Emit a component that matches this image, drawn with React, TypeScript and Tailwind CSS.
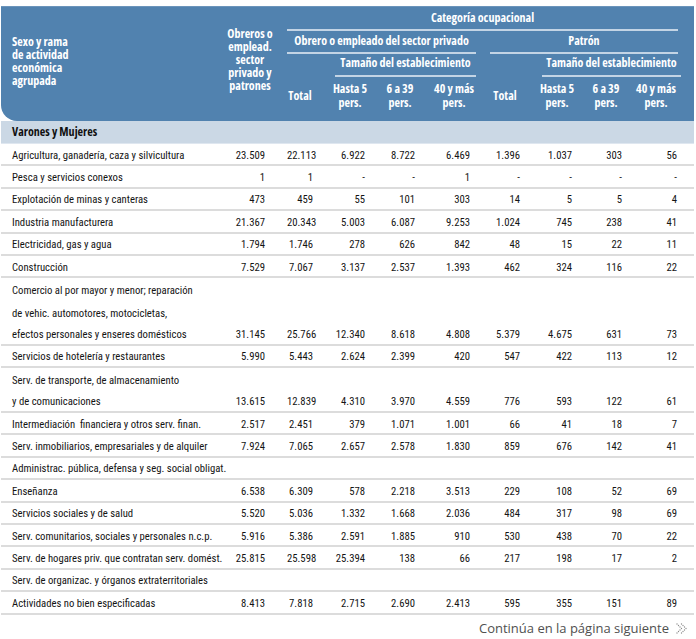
import React from 'react';

/* ─── Column setup ─────────────────────────────────────────────────────── */

const grid = 'grid grid-cols-[234px_52px_48px_50px_53px_52px_52px_48px_45px_59px]';

// right padding so the numbers line up under their headings
const pads = ['', 'pr-[22px]', 'pr-[22px]', 'pr-[20px]', 'pr-[23px]', 'pr-[20px]', 'pr-[22px]', 'pr-[18px]', 'pr-[13px]', 'pr-[17px]'];

type Row = { label: string; values?: string[]; line?: boolean };

const rows: Row[] = [
  { label: 'Agricultura, ganadería, caza y silvicultura', values: ['23.509', '22.113', '6.922', '8.722', '6.469', '1.396', '1.037', '303', '56'] },
  { label: 'Pesca y servicios conexos', values: ['1', '1', '-', '-', '1', '-', '-', '-', '-'] },
  { label: 'Explotación de minas y canteras', values: ['473', '459', '55', '101', '303', '14', '5', '5', '4'] },
  { label: 'Industria manufacturera', values: ['21.367', '20.343', '5.003', '6.087', '9.253', '1.024', '745', '238', '41'] },
  { label: 'Electricidad, gas y agua', values: ['1.794', '1.746', '278', '626', '842', '48', '15', '22', '11'] },
  { label: 'Construcción', values: ['7.529', '7.067', '3.137', '2.537', '1.393', '462', '324', '116', '22'] },
  { label: 'Comercio al por mayor y menor; reparación', line: false },
  { label: 'de vehic. automotores, motocicletas,', line: false },
  { label: 'efectos personales y enseres domésticos', values: ['31.145', '25.766', '12.340', '8.618', '4.808', '5.379', '4.675', '631', '73'] },
  { label: 'Servicios de hotelería y restaurantes', values: ['5.990', '5.443', '2.624', '2.399', '420', '547', '422', '113', '12'] },
  { label: 'Serv. de transporte, de almacenamiento', line: false },
  { label: 'y de comunicaciones', values: ['13.615', '12.839', '4.310', '3.970', '4.559', '776', '593', '122', '61'] },
  { label: 'Intermediación  financiera y otros serv. finan.', values: ['2.517', '2.451', '379', '1.071', '1.001', '66', '41', '18', '7'] },
  { label: 'Serv. inmobiliarios, empresariales y de alquiler', values: ['7.924', '7.065', '2.657', '2.578', '1.830', '859', '676', '142', '41'] },
  { label: 'Administrac. pública, defensa y seg. social obligat.' },
  { label: 'Enseñanza', values: ['6.538', '6.309', '578', '2.218', '3.513', '229', '108', '52', '69'] },
  { label: 'Servicios sociales y de salud', values: ['5.520', '5.036', '1.332', '1.668', '2.036', '484', '317', '98', '69'] },
  { label: 'Serv. comunitarios, sociales y personales n.c.p.', values: ['5.916', '5.386', '2.591', '1.885', '910', '530', '438', '70', '22'] },
  { label: 'Serv. de hogares priv. que contratan serv. domést.', values: ['25.815', '25.598', '25.394', '138', '66', '217', '198', '17', '2'] },
  { label: 'Serv. de organizac. y órganos extraterritoriales' },
  { label: 'Actividades no bien especificadas', values: ['8.413', '7.818', '2.715', '2.690', '2.413', '595', '355', '151', '89'] },
];

function Rule() {
  return <div className="h-[2px] bg-[#c3d4e5]" />;
}

function Pair({ top, bottom, pad, col }: { top: string; bottom: string; pad: string; col: string }) {
  return (
    <div className={`${col} row-start-4 flex flex-col items-center justify-center leading-[14px] whitespace-nowrap ${pad}`}>
      <span>{top}</span>
      <span>{bottom}</span>
    </div>
  );
}

function MoreIcon() {
  // two dotted chevrons
  const dots = [
    [0, 0], [1.5, 1.5], [3, 3], [4.5, 4.5], [3, 6], [1.5, 7.5], [0, 9],
  ];
  return (
    <svg width="12" height="11" viewBox="-1 -1 12 11" className="shrink-0">
      {dots.map(([x, y], i) => (
        <g key={i}>
          <circle cx={x} cy={y} r="0.65" fill="#8a8a8a" />
          <circle cx={x + 4.5} cy={y} r="0.65" fill="#8a8a8a" />
        </g>
      ))}
    </svg>
  );
}

export default function App() {
  return (
    <div className="w-[696px] h-[639px] bg-white text-[#141414] font-['Open_Sans',sans-serif] overflow-hidden">
      <div className="ml-px w-[693px] pt-[6px]">
        {/* Header */}
        <div className={`${grid} grid-rows-[25px_22px_23px_38px] pb-[6px] bg-[#5182af] rounded-bl-[16px] text-white font-bold text-[12px] font-stretch-[85%] border-t border-[#6b94bb]`}>
          <div className="col-start-1 row-start-1 row-span-4 pl-[11px] pt-[28px] flex flex-col leading-[13px]">
            <span>Sexo y rama</span>
            <span>de actividad</span>
            <span>económica</span>
            <span>agrupada</span>
          </div>
          <div className="col-start-2 row-start-1 row-span-4 pt-[20px] pr-[22px] flex flex-col items-center leading-[13px] whitespace-nowrap">
            <span>Obreros o</span>
            <span>emplead.</span>
            <span>sector</span>
            <span>privado y</span>
            <span>patrones</span>
          </div>

          <div className="col-start-3 col-span-8 row-start-1 mr-[16px] pt-[4px] flex flex-col">
            <div className="text-center leading-[14px]">Categoría ocupacional</div>
            <div className="mt-[4px]"><Rule /></div>
          </div>

          <div className="col-start-3 col-span-4 row-start-2 mr-[14px] pt-[2px] flex flex-col">
            <div className="text-center leading-[14px] whitespace-nowrap">Obrero o empleado del sector privado</div>
            <div className="mt-[4px]"><Rule /></div>
          </div>
          <div className="col-start-7 col-span-4 row-start-2 mr-[16px] pt-[2px] flex flex-col">
            <div className="text-center leading-[14px]">Patrón</div>
            <div className="mt-[4px]"><Rule /></div>
          </div>

          <div className="col-start-4 col-span-3 row-start-3 mr-[14px] pt-[2px] flex flex-col">
            <div className="text-center leading-[14px] whitespace-nowrap">Tamaño del establecimiento</div>
            <div className="mt-[5px]"><Rule /></div>
          </div>
          <div className="col-start-8 col-span-3 row-start-3 mr-[13px] pt-[2px] flex flex-col">
            <div className="text-center leading-[14px] whitespace-nowrap">Tamaño del establecimiento</div>
            <div className="mt-[5px]"><Rule /></div>
          </div>

          <div className="col-start-3 row-start-4 flex items-center justify-center pr-[22px]">Total</div>
          <Pair col="col-start-4" top="Hasta 5" bottom="pers." pad="pr-[20px]" />
          <Pair col="col-start-5" top="6 a 39" bottom="pers." pad="pr-[23px]" />
          <Pair col="col-start-6" top="40 y más" bottom="pers." pad="pr-[20px]" />
          <div className="col-start-7 row-start-4 flex items-center justify-center pr-[22px]">Total</div>
          <Pair col="col-start-8" top="Hasta 5" bottom="pers." pad="pr-[18px]" />
          <Pair col="col-start-9" top="6 a 39" bottom="pers." pad="pr-[13px]" />
          <Pair col="col-start-10" top="40 y más" bottom="pers." pad="pr-[17px]" />
        </div>

        {/* Section band */}
        <div className="h-[23px] bg-[#cbd8e5] border-b border-[#dfe7f0] pl-[11px] flex items-center font-bold text-[12px] font-stretch-[85%] text-[#111]">
          Varones y Mujeres
        </div>

        {/* Body */}
        <div className="text-[10.7px] font-['Roboto_Condensed','Roboto',sans-serif]">
          {rows.map((r, i) => (
            <div
              key={i}
              className={`${grid} h-[22.42px] pt-[3px] items-center ${r.line === false ? '' : 'border-b-2 border-[#dcdcdc]'}`}
            >
              <div className="pl-[11px] whitespace-pre">{r.label}</div>
              {r.values?.map((v, j) => (
                <div key={j} className={`text-right ${pads[j + 1]}`}>{v}</div>
              ))}
            </div>
          ))}
        </div>

        {/* Footer */}
        <div className="flex items-center justify-end gap-[7px] pr-[6px] pt-[4px] text-[13px] text-[#505050]">
          <span>Continúa en la página siguiente</span>
          <MoreIcon />
        </div>
      </div>
    </div>
  );
}
